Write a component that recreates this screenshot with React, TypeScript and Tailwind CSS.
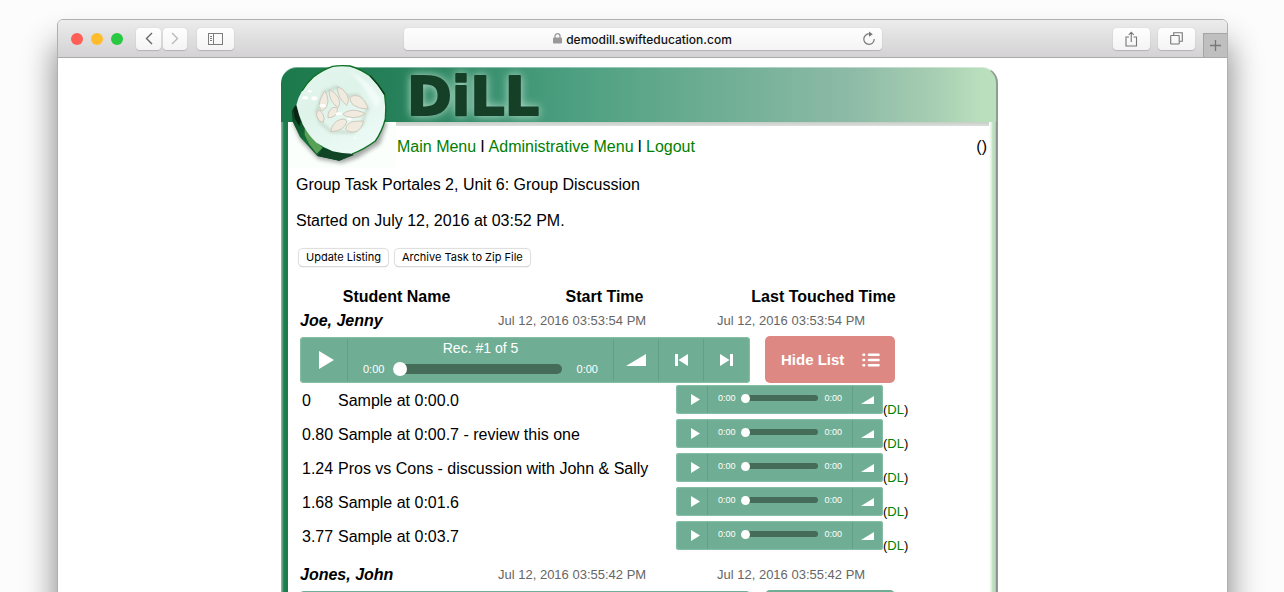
import React from "react";

type Sample = { time: string; label: string };
type Student = { name: string; started: string; touched: string; open: boolean; samples: Sample[] };

const students: Student[] = [
  {
    name: "Joe, Jenny",
    started: "Jul 12, 2016 03:53:54 PM",
    touched: "Jul 12, 2016 03:53:54 PM",
    open: true,
    samples: [
      { time: "0", label: "Sample at 0:00.0" },
      { time: "0.80", label: "Sample at 0:00.7 - review this one" },
      { time: "1.24", label: "Pros vs Cons - discussion with John & Sally" },
      { time: "1.68", label: "Sample at 0:01.6" },
      { time: "3.77", label: "Sample at 0:03.7" },
    ],
  },
  {
    name: "Jones, John",
    started: "Jul 12, 2016 03:55:42 PM",
    touched: "Jul 12, 2016 03:55:42 PM",
    open: false,
    samples: [],
  },
];

const toolButton =
  "flex h-[22px] items-center justify-center rounded-[4px] bg-linear-to-b from-[#fefefe] to-[#f4f4f4] shadow-[0_1px_1px_#b4b2b4,0_0_1px_#c4c2c4]";

function Toolbar() {
  return (
    <header className="flex h-[38px] shrink-0 items-center rounded-t-[5px] border-b border-[#aca9ac] bg-linear-to-b from-[#ececec] to-[#d4d2d4]">
      <div className="flex flex-1 items-center">
        <div className="ml-[13px] flex gap-2">
          <span className="size-3 rounded-full bg-[#ff5f57]" />
          <span className="size-3 rounded-full bg-[#ffbd2e]" />
          <span className="size-3 rounded-full bg-[#28c940]" />
        </div>
        <div className="ml-[13px] flex gap-[2px]">
          <button aria-label="Back" className={`${toolButton} w-[25px]`}>
            <svg width="8" height="13" viewBox="0 0 8 13" fill="none" stroke="#666" strokeWidth="1.4">
              <path d="M7 1 1.5 6.5 7 12" />
            </svg>
          </button>
          <button aria-label="Forward" className={`${toolButton} w-6`}>
            <svg width="8" height="13" viewBox="0 0 8 13" fill="none" stroke="#b9b9b9" strokeWidth="1.4">
              <path d="M1 1 6.5 6.5 1 12" />
            </svg>
          </button>
        </div>
        <button aria-label="Show sidebar" className={`${toolButton} ml-[10px] w-[37px]`}>
          <svg width="15" height="12" viewBox="0 0 15 12" fill="none" stroke="#7c7c7c">
            <rect x="0.5" y="0.5" width="14" height="11" />
            <path d="M5.500 1v11M2 3.500h2M2 5.500h2M2 7.500h2" />
          </svg>
        </button>
      </div>
      <div className={`${toolButton} relative w-[41%] max-w-[478px] gap-1`}>
        <svg width="9" height="11" viewBox="0 0 9 11">
          <rect y="4.500" width="9" height="6" rx="0.8" fill="#999" />
          <path d="M2 5V3.200a2.500 2.500 0 0 1 5 0V5" fill="none" stroke="#999" strokeWidth="1.3" />
        </svg>
        <input
          aria-label="Address"
          readOnly
          value="demodill.swifteducation.com"
          className="field-sizing-content bg-transparent pt-[2px] font-[Inter,sans-serif] text-[12px] leading-4 font-medium text-[#111] outline-none"
        />
        <button aria-label="Reload" className="absolute top-[3px] right-[6px]">
          <svg width="14" height="15" viewBox="0 0 14 15" fill="none" stroke="#777" strokeWidth="1.2">
            <path d="M7.500 3A5.200 5.200 0 1 0 12.200 8" />
            <path d="M7 0.500 10.800 3.200 7 5.800z" fill="#777" stroke="none" />
          </svg>
        </button>
      </div>
      <div className="flex flex-1 items-center justify-end gap-2 self-stretch">
        <button aria-label="Share" className={`${toolButton} w-[37px]`}>
          <svg width="13" height="16" viewBox="0 0 13 16" fill="none" stroke="#777" strokeWidth="1.1">
            <path d="M4 6H1v9h10.500V6h-3M6.250 11V1.500M3.800 3.800 6.250 1.200 8.700 3.800" />
          </svg>
        </button>
        <button aria-label="Show all tabs" className={`${toolButton} w-[37px]`}>
          <svg width="13" height="13" viewBox="0 0 13 13" fill="none" stroke="#777" strokeWidth="1.1">
            <rect x="0.7" y="3.500" width="8.500" height="8.500" rx="0.5" />
            <path d="M3.700 3V0.700h8.600V9.200H9.800" />
          </svg>
        </button>
        <button
          aria-label="New tab"
          className="flex h-6 w-6 items-center justify-center self-end border-t border-l border-[#a5a5a5] bg-[#bfbfbf]"
        >
          <svg width="11" height="11" viewBox="0 0 11 11" stroke="#777" strokeWidth="1.3">
            <path d="M5.500 0v11M0 5.500h11" />
          </svg>
        </button>
      </div>
    </header>
  );
}

function CucumberLogo() {
  return (
    <svg className="absolute -top-[7px] left-[7px]" width="108" height="110" viewBox="54 15 324 330" aria-hidden="true">
      <defs>
        <filter id="soft" x="-20%" y="-20%" width="140%" height="140%">
          <feGaussianBlur stdDeviation="6" />
        </filter>
        <filter id="halo" x="-20%" y="-20%" width="140%" height="140%">
          <feGaussianBlur stdDeviation="5" />
        </filter>
        <linearGradient id="rind" x1="0" y1="0" x2="1" y2="1">
          <stop offset="0" stopColor="#0d3a20" />
          <stop offset="0.45" stopColor="#147038" />
          <stop offset="1" stopColor="#0c3a1e" />
        </linearGradient>
        <linearGradient id="flesh" x1="0" y1="0" x2="0.6" y2="1">
          <stop offset="0" stopColor="#e6f7f0" />
          <stop offset="0.45" stopColor="#def3ea" />
          <stop offset="1" stopColor="#ecfaf6" />
        </linearGradient>
      </defs>
      <rect x="54" y="201" width="324" height="137" fill="#fbfffb" />
      <path d="M80 170 70 205 92 256 145 312 215 324 262 308 330 266 352 201z" opacity="0.35" filter="url(#soft)" />
      <path d="M80 146 65 168 68 200 90 246 142 303 208 317 252 300 200 270 110 180z" fill="url(#rind)" />
      <path d="M70 160 80 150 92 200 88 214 74 190z" fill="#0c2414" />
      <path d="M104 220 130 250 158 278 140 296 118 268 104 240z" fill="#57a055" />
      <path d="M158 278 200 292 250 297 208 317 142 303z" fill="#0f4526" />
      <path
        d="M79 150Q84 128 96 108Q112 82 130 66Q158 44 188 34Q214 30 240 33Q272 42 302 64Q328 90 344 120Q350 156 346 192Q336 230 316 258Q284 282 246 296Q216 296 188 289Q160 278 138 262Q114 240 98 208Q86 180 79 150z"
        fill="url(#flesh)"
      />
      <path
        d="M96 108Q112 82 130 66Q158 44 188 34Q214 30 240 33Q272 42 302 64Q328 90 344 120Q350 156 346 192Q336 230 316 258Q284 282 246 297"
        fill="none"
        stroke="#0d6f22"
        strokeWidth="4"
      />
      <path d="M300 62Q326 88 344 118" fill="none" stroke="#0b3a1a" strokeWidth="4" />
      <path d="M240 48Q300 80 332 130Q330 150 318 160Q290 100 240 48z" fill="#f2fbf8" filter="url(#halo)" />
      <g id="seeds" fill="#b3c4b4" stroke="#b3c4b4" strokeWidth="8" opacity="0.6" filter="url(#halo)">
        <path d="M164 110 180 104 200 96 230 124 262 120 294 160 284 180 278 206 248 232 184 230 150 202 140 170z" fill="none" />
      </g>
      <g fill="#f1ebdf" stroke="#cdcabb" strokeWidth="3" strokeLinejoin="round">
        <path d="M164 108q-22 34-14 52q2 8 6 8q16-8 18-30q0-18-10-30z" />
        <path d="M178 104q-4 32 26 54q10-14 0-32q-10-16-26-22z" />
        <path d="M202 95q0 34 28 56q10-16 0-34q-10-16-28-22z" />
        <path d="M240 128q8-10 28-4q18 10 26 38q-28 0-44-12q-12-12-10-22z" />
        <path d="M218 178q16-14 40-12q20 4 28 10q-14 12-36 12q-24-2-32-10z" />
        <path d="M142 166q-6 16 2 26q6 8 16 10q6-12-2-26q-6-10-16-10z" />
        <path d="M174 188q-2-20 14-30q16-4 14 8q-2 22-28 22z" />
        <path d="M182 230q4-28 28-36q20-6 20 8q-8 26-48 28z" />
        <path d="M226 222q6-18 22-22q18-2 32-2q-4 24-22 32q-22 4-32-8z" />
      </g>
      <g fill="#fff">
        <ellipse cx="119" cy="109" rx="6" ry="4" />
        <ellipse cx="106" cy="128" rx="9" ry="5" />
        <ellipse cx="133" cy="130" rx="9" ry="6" />
        <ellipse cx="158" cy="152" rx="10" ry="5" />
        <ellipse cx="207" cy="176" rx="10" ry="5" />
        <ellipse cx="238" cy="192" rx="7" ry="4" />
        <circle cx="256" cy="248" r="3" />
      </g>
    </svg>
  );
}

function Banner() {
  return (
    <div className="h-[55px] rounded-t-[16px] border-t border-r-2 border-t-white/40 border-r-[#8f9d92] bg-linear-[90deg,#1b7a4a_0%,#26805a_16%,#4b9f80_40%,#8ebba7_80%,#a6cdb2_91%,#badfbd_98%] pl-[120px]">
      <svg width="160" height="54" viewBox="0 0 160 54" className="overflow-visible" role="img" aria-label="DiLL">
        <text
          x="6"
          y="47"
          fontFamily="DejaVu Sans"
          fontWeight="bold"
          fontSize="54"
          fill="#153f27"
          stroke="#153f27"
          strokeWidth="2"
          strokeLinejoin="round"
          className="drop-shadow-[0_0_5px_#b9dfce]"
        >
          DiLL
        </text>
      </svg>
    </div>
  );
}

function PlayIcon({ small }: { small?: boolean }) {
  return (
    <svg className={small ? "h-[11px] w-[9px]" : "h-[18px] w-[15px]"} viewBox="0 0 15 18" preserveAspectRatio="none">
      <path d="M0 0 15 9 0 18z" fill="#fff" />
    </svg>
  );
}

function VolumeIcon({ small }: { small?: boolean }) {
  return (
    <svg className={small ? "h-2 w-[13px]" : "h-3 w-5"} viewBox="0 0 20 12" preserveAspectRatio="none">
      <path d="M0 12 20 0V12z" fill="#fff" />
    </svg>
  );
}

const segment = "flex shrink-0 items-center justify-center";

function MainPlayer() {
  return (
    <div className="flex h-[46px] w-[450px] rounded-[4px] bg-[#6fae94] text-white shadow-[inset_0_0_1px_1px_#86bfa8]">
      <button aria-label="Play" className={`${segment} my-[2px] w-12 border-r border-[#639f86] pl-[6px]`}>
        <PlayIcon />
      </button>
      <div className="flex flex-1 flex-col px-[15px] pt-[3px]">
        <div className="text-center text-[14px] leading-4">Rec. #1 of 5</div>
        <div className="mt-[6px] flex items-center text-[11px] leading-[14px]">
          <span>0:00</span>
          <input
            type="range"
            aria-label="Position"
            defaultValue={0}
            className="mr-auto ml-[9px] h-[10px] w-[169px] appearance-none rounded-full bg-[#456b59] [&::-webkit-slider-thumb]:size-[14px] [&::-webkit-slider-thumb]:appearance-none [&::-webkit-slider-thumb]:rounded-full [&::-webkit-slider-thumb]:bg-white"
          />
          <span>0:00</span>
        </div>
      </div>
      <button aria-label="Volume" className={`${segment} my-[2px] w-[45px] border-l border-[#639f86]`}>
        <VolumeIcon />
      </button>
      <button aria-label="Previous recording" className={`${segment} my-[2px] w-[45px] border-l border-[#639f86]`}>
        <svg width="13" height="12" viewBox="0 0 13 12" fill="#fff">
          <path d="M0 0h3v12H0zM13 0v12L3.500 6z" />
        </svg>
      </button>
      <button aria-label="Next recording" className={`${segment} my-[2px] w-[47px] border-l border-[#639f86] pr-[2px]`}>
        <svg width="13" height="12" viewBox="0 0 13 12" fill="#fff">
          <path d="M10 0h3v12h-3zM0 0v12L9.500 6z" />
        </svg>
      </button>
    </div>
  );
}

function SamplePlayer({ label }: { label: string }) {
  return (
    <div className="flex h-[29px] w-[207px] rounded-[3px] bg-[#6fae94] text-[9px] leading-3 text-white shadow-[inset_0_0_1px_1px_#86bfa8]">
      <button aria-label={`Play ${label}`} className={`${segment} my-px w-8 border-r border-[#639f86] pl-2`}>
        <PlayIcon small />
      </button>
      <div className="flex flex-1 items-center px-[10px] pb-[3px]">
        <span>0:00</span>
        <input
          type="range"
          aria-label={`Position in ${label}`}
          defaultValue={0}
          className="mr-auto ml-[5px] h-[6px] w-[77px] appearance-none rounded-full bg-[#456b59] [&::-webkit-slider-thumb]:size-[9px] [&::-webkit-slider-thumb]:appearance-none [&::-webkit-slider-thumb]:rounded-full [&::-webkit-slider-thumb]:bg-white"
        />
        <span>0:00</span>
      </div>
      <button aria-label={`Volume of ${label}`} className={`${segment} my-px w-[31px] border-l border-[#639f86] pr-px`}>
        <VolumeIcon small />
      </button>
    </div>
  );
}

function HideListButton() {
  return (
    <button className="flex h-[47px] w-[130px] items-center justify-between rounded-[5px] bg-[#de8883] pr-[15px] pl-4 text-[15px] font-bold text-white">
      Hide List
      <svg width="18" height="14" viewBox="0 0 18 14" stroke="#fff" strokeWidth="2.6" strokeLinecap="round">
        <path d="M7 1.800h9.500M7 7h9.500M7 12.200h9.500M1.500 1.800h.6M1.500 7h.6M1.500 12.200h.6" />
      </svg>
    </button>
  );
}

function SampleTable({ samples }: { samples: Sample[] }) {
  return (
    <table className="mt-[2px] mb-2 w-full border-collapse">
      <tbody>
        {samples.map((s) => (
          <tr key={s.time} className="h-[34px]">
            <td className="w-[38px] pb-[3px] pl-[2px]">{s.time}</td>
            <td className="w-[338px] pb-[3px]">{s.label}</td>
            <td className="align-top">
              <div className="flex h-[34px]">
                <SamplePlayer label={s.label} />
                <span className="self-end text-[13px] leading-[18px]">
                  (
                  <a href="#download" className="text-[#008000]">
                    DL
                  </a>
                  )
                </span>
              </div>
            </td>
          </tr>
        ))}
      </tbody>
    </table>
  );
}

function StudentRows({ student }: { student: Student }) {
  return (
    <>
      <tr className="h-6">
        <td className="pl-[2px] font-bold italic">{student.name}</td>
        <td className="pl-[3px] text-[13px] text-[#666]">{student.started}</td>
        <td className="pl-[3px] text-[13px] text-[#666]">{student.touched}</td>
      </tr>
      <tr>
        <td colSpan={3} className="pt-[3px] pl-[2px]">
          {student.open ? (
            <>
              <div className="flex items-end gap-[15px]">
                <MainPlayer />
                <HideListButton />
              </div>
              <SampleTable samples={student.samples} />
            </>
          ) : (
            <div className="flex items-end gap-[15px]">
              <div className="h-[46px] w-[450px] rounded-[4px] bg-[#6fae94]" />
              <div className="h-[47px] w-[130px] rounded-[5px] bg-[#6fae94]" />
            </div>
          )}
        </td>
      </tr>
    </>
  );
}

const formButton =
  "h-[17px] rounded-[4px] bg-white px-[7px] font-[Inter,sans-serif] text-[11px] leading-[17px] text-black shadow-[0_0_1px_1px_#dcdcdc,0_1px_1px_#b5b5b5]";

function TaskPage() {
  return (
    <main className="pt-[9px] pr-[6px] pb-12 font-['Liberation_Sans',Arial,sans-serif] text-[16px] leading-[18px] text-black">
      <div className="relative mx-auto max-w-[717px]">
        <Banner />
        <div className="flex">
          <div className="w-[7px] shrink-0 bg-linear-to-r from-[#7db598] from-10% via-[#1f7f50] via-40% to-[#1b7a4a]" />
          <div className="min-w-0 flex-1">
            <div className="h-1 bg-linear-to-b from-[#c6cdc7] to-[#dde0dd]" />
            <div className="pt-3 pl-2">
              <nav className="flex justify-between pr-[2px] pl-[101px]">
                <div className="relative z-10 flex gap-1 text-[#008000]">
                  <a href="#main">Main Menu</a>
                  <span className="text-black">I</span>
                  <a href="#admin">Administrative Menu</a>
                  <span className="text-black">I</span>
                  <a href="#logout">Logout</a>
                </div>
                <span>()</span>
              </nav>
              <p className="mt-5">Group Task Portales 2, Unit 6: Group Discussion</p>
              <p className="mt-[18px]">Started on July 12, 2016 at 03:52 PM.</p>
              <div className="mt-[19px] flex gap-[7px] pl-[3px]">
                <button className={formButton}>Update Listing</button>
                <button className={formButton}>Archive Task to Zip File</button>
              </div>
              <table className="mt-[19px] ml-[2px] w-[635px] table-fixed border-collapse">
                <thead>
                  <tr className="h-6">
                    <th className="w-[197px]">Student Name</th>
                    <th>Start Time</th>
                    <th>Last Touched Time</th>
                  </tr>
                </thead>
                <tbody>
                  {students.map((s) => (
                    <StudentRows key={s.name} student={s} />
                  ))}
                </tbody>
              </table>
            </div>
          </div>
          <div className="w-[9px] shrink-0 bg-linear-[90deg,#ffffff_0%,#e3f2e4_25%,#b9dfbc_45%,#b9dfbc_70%,#8f8f8f_80%,#999999_100%]" />
        </div>
        <CucumberLogo />
      </div>
    </main>
  );
}

export default function App() {
  return (
    <div className="h-screen overflow-hidden bg-[#fcfcfc] pt-[19px] pr-[56px] pl-[57px]">
      <div className="min-h-full rounded-t-[6px] border border-[#b0aeb0] bg-white shadow-[0_26px_32px_2px_rgba(0,0,0,0.45)]">
        <Toolbar />
        <TaskPage />
      </div>
    </div>
  );
}
